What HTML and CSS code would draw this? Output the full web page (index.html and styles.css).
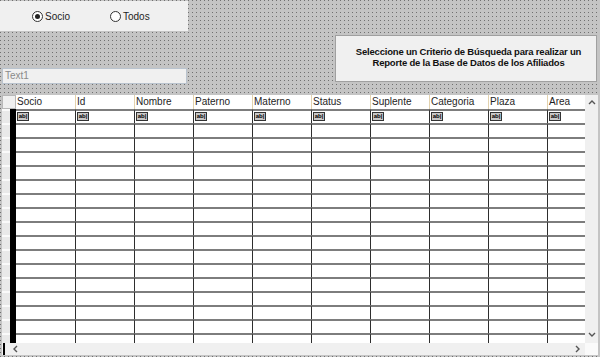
FILE: index.html
```html
<html lang="es">
<head>
    <meta charset="UTF-8">
    <meta name="viewport" content="width=device-width, initial-scale=1.0">
    <title>Reporte de Afiliados</title>
    <link rel="stylesheet" href="styles.css">
</head>
<body>
    <div class="form">
        <div class="top">
            <div class="left">
                <div class="options">
                    <label class="opt"><span class="radio on"></span>Socio</label>
                    <label class="opt"><span class="radio"></span>Todos</label>
                </div>
                <div class="textbox">Text1</div>
            </div>
            <div class="caption">Seleccione un Criterio de Búsqueda para realizar un<br>Reporte de la Base de Datos de los Afiliados</div>
        </div>

        <div class="grid">
            <div class="main">
                <div class="body" id="gridBody">
                    <div class="hrow">
                        <div class="corner"></div>
                        <div class="hcell first">Socio</div>
                        <div class="hcell">Id</div>
                        <div class="hcell">Nombre</div>
                        <div class="hcell">Paterno</div>
                        <div class="hcell">Materno</div>
                        <div class="hcell">Status</div>
                        <div class="hcell">Suplente</div>
                        <div class="hcell">Categoria</div>
                        <div class="hcell">Plaza</div>
                        <div class="hcell">Area</div>
                    </div>
                </div>
                <div class="vscroll">
                    <svg width="8" height="6" viewBox="0 0 8 6"><path d="M1 5 L4 2 L7 5" fill="none" stroke="#555" stroke-width="1.4"/></svg>
                    <svg width="8" height="6" viewBox="0 0 8 6"><path d="M1 1 L4 4 L7 1" fill="none" stroke="#555" stroke-width="1.4"/></svg>
                </div>
            </div>
            <div class="hscroll">
                <div class="track">
                    <span class="caret"></span>
                    <svg class="left-arrow" width="6" height="8" viewBox="0 0 6 8"><path d="M5 1 L2 4 L5 7" fill="none" stroke="#555" stroke-width="1.4"/></svg>
                    <svg class="right-arrow" width="6" height="8" viewBox="0 0 6 8"><path d="M1 1 L4 4 L1 7" fill="none" stroke="#555" stroke-width="1.4"/></svg>
                </div>
                <div class="sizer"></div>
            </div>
        </div>
    </div>

    <script>
        const gridBody = document.getElementById('gridBody');
        const columns = 10;
        const rows = 17;

        for (let r = 0; r < rows; r++) {
            const row = document.createElement('div');
            row.className = 'row';
            row.innerHTML = '<div class="sel"></div><div class="bar"></div>';
            for (let c = 0; c < columns; c++) {
                const cell = document.createElement('div');
                cell.className = c === 0 ? 'cell first' : 'cell';
                if (r === 0) {
                    cell.innerHTML = '<span class="ab">ab|</span>';
                }
                row.appendChild(cell);
            }
            gridBody.appendChild(row);
        }
    </script>
</body>
</html>
```

FILE: styles.css
```css
body {
    margin: 0;
    width: 600px;
    height: 357px;
    overflow: hidden;
    font-family: 'Liberation Sans', Arial, sans-serif;
    font-size: 10px;
    color: #1e1e1e;
    background: conic-gradient(at 1px 1px, transparent 75%, #707070 0) 0 0 / 4px 4px, #c4c4c4;
}
.top {
    display: flex;
    justify-content: space-between;
    height: 95px;
}
.left {
    width: 188px;
}
.options {
    display: flex;
    align-items: center;
    height: 30px;
    margin-top: 1px;
    padding-left: 32px;
    background: #f0f0f0;
}
.opt {
    display: flex;
    align-items: center;
    width: 81px;
}
.radio {
    width: 11px;
    height: 11px;
    box-sizing: border-box;
    border: 1px solid #333;
    border-radius: 50%;
    background: #fff;
    margin-right: 2px;
    display: flex;
    align-items: center;
    justify-content: center;
}
.radio.on::after {
    content: '';
    width: 5px;
    height: 5px;
    border-radius: 50%;
    background: #222;
}
.textbox {
    margin: 37px 0 0 2px;
    width: 185px;
    height: 16px;
    box-sizing: border-box;
    border: 1px solid #b9c3ce;
    background: #f0f0f0;
    color: #8a8a8a;
    padding-left: 2px;
    line-height: 14px;
}
.caption {
    margin: 35px 3px 0 0;
    width: 262px;
    height: 47px;
    box-sizing: border-box;
    border: 1px solid #a0a0a0;
    background: #f0f0f0;
    padding: 10px 0 0 5px;
    text-align: center;
    font-size: 9.5px;
    letter-spacing: -0.2px;
    font-weight: bold;
    line-height: 11px;
    color: #111;
}
.grid {
    margin-left: 2px;
    width: 596px;
    height: 260px;
    display: flex;
    flex-direction: column;
}
.main {
    display: flex;
    height: 248px;
}
.body {
    width: 583px;
    overflow: hidden;
    background: #fff;
}
.hrow, .row {
    display: flex;
    height: 14px;
    width: 604px;
}
.corner {
    width: 14px;
    flex: none;
    box-sizing: border-box;
    background: #f0f0f0;
    border: 1px solid #b8b8b8;
}
.hcell {
    width: 59px;
    flex: none;
    box-sizing: border-box;
    border-left: 1px solid #e2d2ae;
    padding-left: 1px;
    line-height: 14px;
    white-space: nowrap;
}
.hcell.first {
    border-left: none;
}
.sel {
    width: 8px;
    flex: none;
    box-sizing: border-box;
    background: #e9e9e9;
    border-top: 2px solid #fafafa;
}
.bar {
    width: 6px;
    flex: none;
    background: #000;
}
.cell {
    width: 59px;
    flex: none;
    box-sizing: border-box;
    border-top: 2px solid #7d7d7d;
    border-left: 1px solid #2e2e2e;
    padding: 1px 0 0 1px;
}
.cell.first {
    border-left: none;
}
.ab {
    display: block;
    width: 12px;
    height: 9px;
    box-sizing: border-box;
    border: 1px solid #333;
    background: #c8c8c8;
    color: #000;
    font-size: 6px;
    line-height: 7px;
    font-weight: bold;
    text-align: center;
    overflow: hidden;
}
.vscroll {
    width: 13px;
    background: #f0f0f0;
    display: flex;
    flex-direction: column;
    align-items: center;
    justify-content: space-between;
    padding: 4px 0 5px;
    box-sizing: border-box;
}
.hscroll {
    display: flex;
    height: 12px;
}
.track {
    width: 583px;
    display: flex;
    align-items: center;
    background: #f0f0f0;
}
.caret {
    width: 2px;
    height: 12px;
    margin-left: 1px;
    background: #000;
}
.left-arrow {
    margin-left: 7px;
}
.right-arrow {
    margin-left: auto;
    margin-right: 4px;
}
.sizer {
    width: 13px;
    background: #fafafa;
}
```
